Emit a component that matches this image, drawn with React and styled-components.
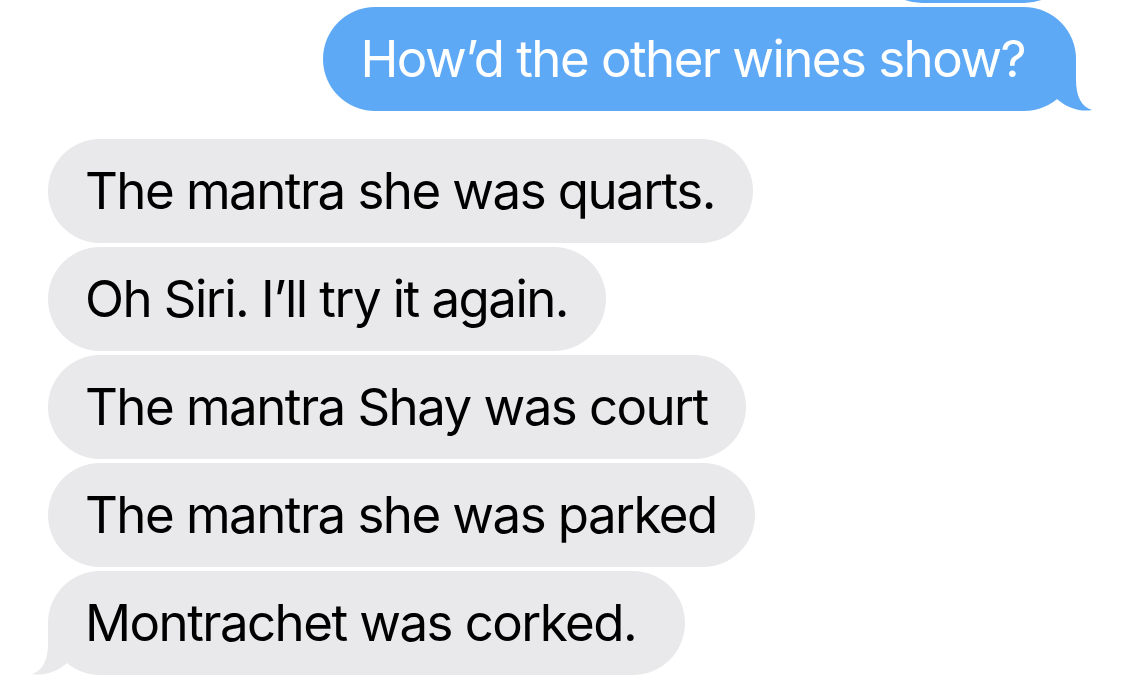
import React from "react";
import styled, { createGlobalStyle, css } from "styled-components";

const GlobalStyle = createGlobalStyle`
  html, body {
    margin: 0;
    padding: 0;
    background: #ffffff;
  }
  body {
    font-family: Inter, "Liberation Sans", Arial, sans-serif;
    overflow: hidden;
  }
`;

const BLUE = "#5ea9f6";
const GREY = "#e9e9eb";

const Thread = styled.div`
  width: 1125px;
  height: 693px;
  display: flex;
  flex-direction: column;
  gap: 4px;
  box-sizing: border-box;
  overflow: hidden;
`;

const Row = styled.div`
  display: flex;
  justify-content: ${(p) => (p.$out ? "flex-end" : "flex-start")};
  padding: ${(p) => (p.$out ? "0 49px 0 0" : "0 0 0 48px")};
  margin-top: ${(p) => p.$offset || 0}px;
`;

const Bubble = styled.div`
  position: relative;
  box-sizing: border-box;
  height: 104px;
  border-radius: 52px;
  font-size: 51px;
  line-height: 66px;
  letter-spacing: -1.55px;
  white-space: nowrap;
  padding: 19px 38px 19px 37px;
  ${(p) =>
    p.$out
      ? css`
          background: ${BLUE};
          color: #ffffff;
        `
      : css`
          background: ${GREY};
          color: #000000;
        `}
  ${(p) => p.$tail && p.$out && css`padding-right: 51px;`}
  ${(p) => p.$tail && !p.$out && css`padding-right: 49px;`}
  ${(p) => p.$w && css`width: ${p.$w}px;`}
`;

const TailSvg = styled.svg`
  position: absolute;
  bottom: 0;
  width: 50px;
  height: 56px;
  ${(p) =>
    p.$out
      ? css`
          right: -16px;
          transform: scaleX(-1);
        `
      : css`
          left: -16px;
        `}
`;

function Tail({ out }) {
  return (
    <TailSvg $out={out} viewBox="-16 -56 50 56" aria-hidden="true">
      <path
        d="M 0 -54 L 0 -31 C 0 -14 -6 -4 -16 -1 C -6 1 8 -2 19 -12 L 34 -30 L 34 -54 Z"
        fill={out ? BLUE : GREY}
      />
    </TailSvg>
  );
}

function Message({ out, tail, children, w }) {
  return (
    <Bubble $out={out} $tail={tail} $w={w}>
      {children}
      {tail && <Tail out={out} />}
    </Bubble>
  );
}

const incoming = [
  "The mantra she was quarts.",
  "Oh Siri. I\u2019ll try it again.",
  "The mantra Shay was court",
  "The mantra she was parked",
  "Montrachet was corked.",
];

export default function App() {
  return (
    <>
      <GlobalStyle />
      <Thread>
        <Row $out $offset={-101}>
          <Message out w={206}>{"\u00a0"}</Message>
        </Row>
        <Row $out>
          <Message out tail>
            How’d the other wines show?
          </Message>
        </Row>
        {incoming.map((t, i) => (
          <Row key={i} $offset={i === 0 ? 24 : 0}>
            <Message tail={i === incoming.length - 1}>{t}</Message>
          </Row>
        ))}
      </Thread>
    </>
  );
}
